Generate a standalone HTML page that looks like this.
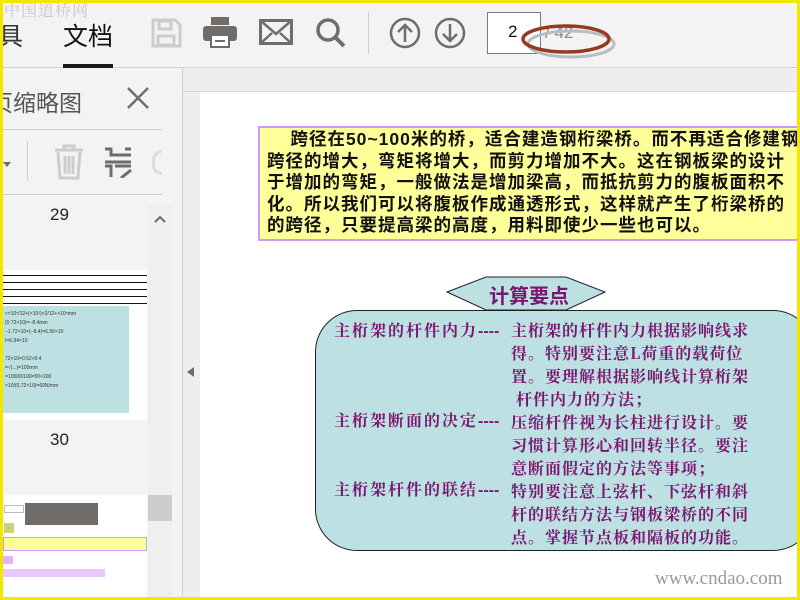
<!DOCTYPE html>
<html><head><meta charset="utf-8"><style>
*{margin:0;padding:0;box-sizing:border-box}
body{width:800px;height:600px;overflow:hidden;background:#f3f3f3;position:relative;font-family:"Liberation Sans","Noto Sans CJK SC",sans-serif}
.abs{position:absolute}
.frame{position:absolute;left:0;top:0;width:800px;height:600px;border:3px solid #f5e600;z-index:50;pointer-events:none}
.cn{font-family:"Liberation Sans","Noto Sans CJK SC",sans-serif}
.tl{font-family:"Noto Serif CJK SC","Noto Sans CJK SC",serif;font-weight:bold;color:#7a1670;font-size:16px;line-height:23px;white-space:nowrap}
.lb{letter-spacing:2px}
.lb b{font-family:"Liberation Sans",sans-serif;letter-spacing:0}
</style></head><body>
<div class="frame"></div>
<div class="abs" style="left:0;top:0;width:800px;height:68px;background:#f3f3f3;border-bottom:1px solid #cfcfcf"></div>
<div class="abs" style="left:4px;top:-2px;font-size:16px;color:#c8c8c8;letter-spacing:1px;font-family:'Noto Serif CJK SC',serif">中国道桥网</div>
<div class="abs cn" style="left:-2px;top:17px;font-size:25px;color:#333">具</div>
<div class="abs cn" style="left:63px;top:17px;font-size:25px;color:#111">文档</div>
<div class="abs" style="left:63px;top:64px;width:50px;height:4px;background:#1a1a1a"></div>
<svg class="abs" style="left:150px;top:17px" width="32" height="32" viewBox="0 0 32 32"><path d="M3 3h22l5 5v21H3z" fill="none" stroke="#ccc" stroke-width="3"/><rect x="9" y="4" width="12" height="8" fill="none" stroke="#ccc" stroke-width="3"/><rect x="8" y="19" width="16" height="9" fill="none" stroke="#ccc" stroke-width="3"/></svg>
<svg class="abs" style="left:203px;top:16px" width="34" height="32" viewBox="0 0 34 32"><rect x="8" y="1" width="18" height="8" fill="#706c6a"/><rect x="0" y="10" width="34" height="15" rx="3" fill="#706c6a"/><rect x="8" y="19" width="18" height="12" fill="#fff" stroke="#706c6a" stroke-width="2"/><rect x="12" y="24" width="10" height="2" fill="#706c6a"/></svg>
<svg class="abs" style="left:259px;top:19px" width="34" height="26" viewBox="0 0 34 26"><rect x="1.5" y="1.5" width="31" height="23" fill="none" stroke="#706c6a" stroke-width="3"/><path d="M2 2l15 13L32 2M2 24l11-10M32 24L21 14" fill="none" stroke="#706c6a" stroke-width="2.5"/></svg>
<svg class="abs" style="left:315px;top:17px" width="32" height="32" viewBox="0 0 32 32"><circle cx="13" cy="13" r="10" fill="none" stroke="#706c6a" stroke-width="3.5"/><path d="M20 20l9 9" stroke="#706c6a" stroke-width="4"/></svg>
<div class="abs" style="left:368px;top:12px;width:1px;height:42px;background:#d0d0d0"></div>
<svg class="abs" style="left:389px;top:17px" width="32" height="32" viewBox="0 0 32 32"><circle cx="16" cy="16" r="14" fill="none" stroke="#706c6a" stroke-width="2.5"/><path d="M16 25V8M9 15l7-7 7 7" fill="none" stroke="#706c6a" stroke-width="2.5"/></svg>
<svg class="abs" style="left:434px;top:17px" width="32" height="32" viewBox="0 0 32 32"><circle cx="16" cy="16" r="14" fill="none" stroke="#706c6a" stroke-width="2.5"/><path d="M16 7v17M9 17l7 7 7-7" fill="none" stroke="#706c6a" stroke-width="2.5"/></svg>
<div class="abs" style="left:487px;top:12px;width:54px;height:42px;background:#fff;border:1px solid #7a7a7a"></div>
<div class="abs" style="left:508px;top:22px;font-size:17px;color:#111">2</div>
<div class="abs" style="left:545px;top:23px;font-size:17px;color:#888">/ 42</div>
<svg class="abs" style="left:518px;top:20px" width="100" height="42" viewBox="0 0 100 42"><ellipse cx="50" cy="21" rx="43" ry="13" fill="none" stroke="#b8bcc4" stroke-width="3" transform="translate(3,3)"/><ellipse cx="48" cy="19" rx="43" ry="13" fill="none" stroke="#953a1e" stroke-width="3.5"/></svg>
<div class="abs" style="left:182px;top:68px;width:1px;height:532px;background:#cfcfcf"></div>
<div class="abs cn" style="left:-10px;top:84px;font-size:23px;color:#555">页缩略图</div>
<svg class="abs" style="left:126px;top:86px" width="24" height="24" viewBox="0 0 24 24"><path d="M2 2l20 20M22 2L2 22" stroke="#706c6a" stroke-width="2.5"/></svg>
<div class="abs" style="left:3px;top:129px;width:159px;height:1px;background:#cfcfcf"></div>
<div class="abs" style="left:3px;top:162px;border:4px solid transparent;border-top:5px solid #706c6a"></div>
<div class="abs" style="left:27px;top:141px;width:1px;height:40px;background:#d0d0d0"></div>
<svg class="abs" style="left:53px;top:144px" width="32" height="36" viewBox="0 0 32 36"><path d="M2 6h28M11 6V2h10v4M5 8l2 26h18l2-26M12 12v18M16 12v18M20 12v18" fill="none" stroke="#cdcdcd" stroke-width="3"/></svg>
<svg class="abs" style="left:105px;top:146px" width="27" height="32" viewBox="0 0 27 32"><path d="M0 3h6v6h20M20 3h6M0 16h26M0 20h6v11M10 20h16M16 32l10-8" fill="none" stroke="#706c6a" stroke-width="3"/></svg>
<div class="abs" style="left:152px;top:150px;width:10px;height:25px;border:3px solid #ddd;border-right:none;border-radius:12px 0 0 12px"></div>
<div class="abs" style="left:3px;top:194px;width:159px;height:1px;background:#cfcfcf"></div>
<div class="abs" style="left:50px;top:205px;font-size:17px;color:#222">29</div>
<div class="abs" style="left:50px;top:430px;font-size:17px;color:#222">30</div>
<div class="abs" style="left:3px;top:270px;width:144px;height:150px;background:#fff"></div>
<div class="abs" style="left:3px;top:275px;width:144px;height:31px;background:repeating-linear-gradient(#111 0 1px,#fff 1px 7px)"></div>
<div class="abs" style="left:3px;top:306px;width:126px;height:107px;background:#bde0e2"></div>
<div class="abs" style="left:5px;top:310px;font-size:5px;line-height:9px;color:#333">≈×10⁵/12+(×10²)×2/12+×10⁵mm<br>(0.72×10)=−8.4mm<br>−1.72×10×(−8.4)=6.56×10<br>I=6.94×10<br><br>72×10=0.52&gt;0.4<br>=√(...)=100mm<br>=10000/100=50&lt;200<br>×10/(0.72×10)=60N/mm</div>
<div class="abs" style="left:3px;top:495px;width:144px;height:105px;background:#fff"></div>
<div class="abs" style="left:25px;top:503px;width:73px;height:22px;background:#706c6a"></div>
<div class="abs" style="left:4px;top:505px;width:20px;height:8px;border:1px solid #bbb"></div>
<div class="abs" style="left:4px;top:523px;width:10px;height:10px;background:#ccd07a"></div>
<div class="abs" style="left:3px;top:537px;width:144px;height:14px;background:#ffff99;border:1px solid #cc99ff"></div>
<div class="abs" style="left:3px;top:556px;width:10px;height:8px;background:#e8b0ff"></div>
<div class="abs" style="left:3px;top:569px;width:102px;height:8px;background:#e8c8ff"></div>
<div class="abs" style="left:148px;top:205px;width:24px;height:395px;background:#efefef"></div>
<svg class="abs" style="left:154px;top:215px" width="12" height="8" viewBox="0 0 12 8"><path d="M1 7l5-5 5 5" fill="none" stroke="#706c6a" stroke-width="2"/></svg>
<div class="abs" style="left:148px;top:495px;width:24px;height:26px;background:#cdcdcd"></div>
<div class="abs" style="left:183px;top:69px;width:617px;height:531px;background:#eeeeee"></div>
<div class="abs" style="left:183px;top:91px;width:617px;height:1px;background:#d5d5d5"></div>
<div class="abs" style="left:187px;top:367px;border:5px solid transparent;border-right:7px solid #706c6a;border-left:none;height:0"></div>
<div class="abs" style="left:200px;top:92px;width:600px;height:508px;background:#fff"></div>
<div class="abs cn" style="left:258px;top:126px;width:550px;height:115px;background:#ffff99;border:2px solid #cc99ff;font-weight:bold;font-size:17.5px;line-height:21.6px;letter-spacing:1px;color:#111;padding:1px 0 0 7px;white-space:nowrap;overflow:hidden">
&nbsp;&nbsp;&nbsp;&nbsp;跨径在50~100米的桥，适合建造钢桁梁桥。而不再适合修建钢<br>跨径的增大，弯矩将增大，而剪力增加不大。这在钢板梁的设计<br>于增加的弯矩，一般做法是增加梁高，而抵抗剪力的腹板面积不<br>化。所以我们可以将腹板作成通透形式，这样就产生了桁梁桥的<br>的跨径，只要提高梁的高度，用料即使少一些也可以。</div>
<div class="abs" style="left:315px;top:310px;width:500px;height:241px;background:#bde0e2;border:1px solid #222;border-radius:42px"></div>
<svg class="abs" style="left:446px;top:276px" width="160" height="36" viewBox="0 0 160 36"><polygon points="1,16 40,1 120,1 159,16 120,34 40,34" fill="#bde0e2" stroke="#222" stroke-width="1"/></svg>
<div class="abs cn" style="left:489px;top:280px;font-size:20px;font-weight:bold;color:#7a1670">计算要点</div>
<div class="abs tl lb" style="left:334px;top:318px">主桁架的杆件内力<b>----</b></div>
<div class="abs tl lb" style="left:334px;top:408px">主桁架断面的决定<b>----</b></div>
<div class="abs tl lb" style="left:334px;top:477px">主桁架杆件的联结<b>----</b></div>
<div class="abs tl" style="left:511px;top:318px;letter-spacing:1px">主桁架的杆件内力根据影响线求<br>得。特别要注意L荷重的载荷位<br>置。要理解根据影响线计算桁架<br>&nbsp;杆件内力的方法；<br>压缩杆件视为长柱进行设计。要<br>习惯计算形心和回转半径。要注<br>意断面假定的方法等事项；<br>特别要注意上弦杆、下弦杆和斜<br>杆的联结方法与钢板梁桥的不同<br>点。掌握节点板和隔板的功能。</div>
<div class="abs" style="left:655px;top:568px;font-family:'Liberation Serif',serif;font-size:19px;color:#999">www.cndao.com</div>
</body></html>
